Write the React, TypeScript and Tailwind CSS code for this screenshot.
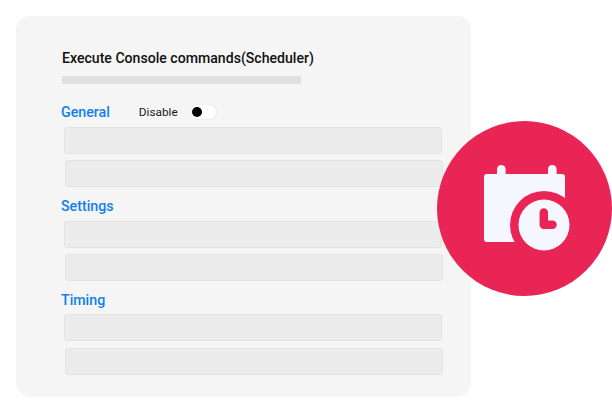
const font = "font-['Roboto',sans-serif]";

function Field({ className }: { className: string }) {
  return <div className={`h-[27px] rounded-[3px] border border-[#e3e3e3] bg-[#ececec] ${className}`} />;
}

function Section({ children, head }: { children: React.ReactNode; head: React.ReactNode }) {
  return (
    <section>
      {head}
      <div className="mt-[5px] flex flex-col gap-[6px]">{children}</div>
    </section>
  );
}

function Heading({ label }: { label: string }) {
  return <h2 className="-ml-px text-[14.2px] leading-[20px] font-medium text-[#0f80ea]">{label}</h2>;
}

function Badge() {
  return (
    <div className="absolute top-[121px] left-[437px] h-[175px] w-[175px] rounded-full bg-[#e82554]">
      <svg viewBox="0 0 175 175" className="h-full w-full">
        <rect x="60" y="44" width="8.6" height="20" rx="4.3" fill="#f4f7fe" />
        <rect x="111" y="44" width="8.6" height="20" rx="4.3" fill="#f4f7fe" />
        <rect x="47" y="53" width="81" height="68" rx="3" fill="#f4f7fe" />
        <circle cx="107" cy="104" r="34" fill="#e82554" />
        <circle cx="107" cy="104" r="25.5" fill="#f4f7fe" />
        <path d="M106.8 91.5V103.8H115.5" fill="none" stroke="#e82554" strokeWidth="8.5" strokeLinecap="round" strokeLinejoin="round" />
      </svg>
    </div>
  );
}

export default function App() {
  return (
    <div className={`relative h-[414px] w-[612px] overflow-hidden bg-white pt-[16px] pl-[16px] ${font}`}>
      <div className="h-[381px] w-[455px] rounded-[14px] bg-[#f5f5f5] pt-[32px] pl-[46px]">
        <h1 className="text-[14.1px] leading-[20px] font-medium text-[#111]">Execute Console commands(Scheduler)</h1>
        <div className="mt-[8px] h-[8px] w-[239px] bg-[#e0e0e0]" />
        <div className="mt-[18px] flex w-[381px] flex-col gap-[9px]">
          <Section
            head={
              <div className="flex items-center">
                <Heading label="General" />
                <span className="ml-[29px] text-[11.8px] leading-[20px] text-[#1a1a1a]">Disable</span>
                <span className="ml-[12px] flex h-[16px] w-[27px] items-center rounded-full border border-[#efefef] bg-white pl-[1px]">
                  <span className="h-[10px] w-[10px] rounded-full bg-black" />
                </span>
              </div>
            }
          >
            <Field className="ml-[2px] w-[378px]" />
            <Field className="ml-[3px] w-[378px]" />
          </Section>
          <Section head={<Heading label="Settings" />}>
            <Field className="ml-[2px] w-[378px]" />
            <Field className="ml-[3px] w-[378px]" />
          </Section>
          <Section head={<Heading label="Timing" />}>
            <Field className="-mt-px mb-px ml-[2px] w-[378px]" />
            <Field className="ml-[3px] w-[378px]" />
          </Section>
        </div>
      </div>
      <Badge />
    </div>
  );
}
